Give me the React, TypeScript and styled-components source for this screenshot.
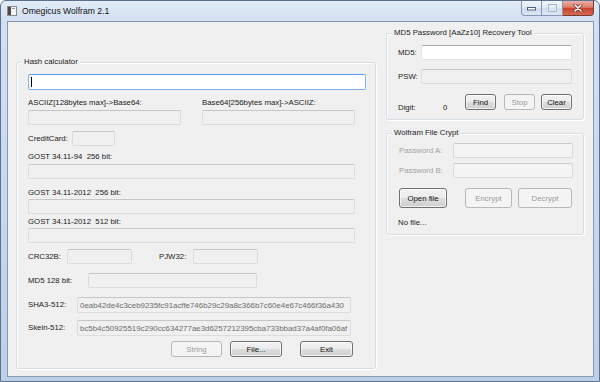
import React from 'react';
import styled, { createGlobalStyle } from 'styled-components';

const FONT = `'Liberation Sans', Tahoma, Arial, sans-serif`;

const GlobalStyle = createGlobalStyle`
  html, body {
    margin: 0;
    padding: 0;
    width: 600px;
    height: 382px;
    overflow: hidden;
    background: #ffffff;
  }
  body {
    font-family: ${FONT};
  }
`;

const Window = styled.div`
  box-sizing: border-box;
  width: 600px;
  height: 382px;
  display: flex;
  flex-direction: column;
  border: 1px solid #5d7190;
  border-radius: 6px 6px 0 0;
  background: linear-gradient(180deg, #e3ecf7 0%, #d2e0f1 18px, #c6d7ec 60%, #bcd0e8 100%);
`;

const TitleBar = styled.div`
  height: 20px;
  display: flex;
  align-items: center;
  padding-left: 6px;
`;

const Title = styled.span`
  margin-left: 5px;
  font-family: ${FONT};
  font-size: 8.6px;
  color: #111;
  line-height: 12px;
`;

const CaptionButtons = styled.div`
  margin-left: auto;
  margin-right: 5px;
  align-self: flex-start;
  display: flex;
  height: 15px;
`;

const CapBtn = styled.div<{ $w: number; $kind: 'min' | 'max' | 'close' }>`
  box-sizing: border-box;
  width: ${(p) => p.$w}px;
  height: 15px;
  display: flex;
  align-items: center;
  justify-content: center;
  border: 1px solid ${(p) => (p.$kind === 'close' ? '#7c3b31' : '#8497b5')};
  border-top: none;
  border-left: ${(p) => (p.$kind === 'min' ? '1px solid #8497b5' : 'none')};
  border-radius: ${(p) =>
    p.$kind === 'min' ? '0 0 0 4px' : p.$kind === 'close' ? '0 0 4px 0' : '0'};
  background: ${(p) =>
    p.$kind === 'close'
      ? 'linear-gradient(180deg, #eab0a5 0%, #de7e6c 45%, #c9432f 52%, #d66a52 100%)'
      : 'linear-gradient(180deg, #f1f5fb 0%, #e2eaf5 48%, #d0dded 52%, #dbe6f3 100%)'};
`;

const Client = styled.div`
  box-sizing: border-box;
  flex: 1;
  margin: 0 5px 4px 6px;
  background: #f0f0f0;
  border: 1px solid #8598b4;
  display: flex;
  align-items: flex-start;
  padding-left: 8px;
`;

const Column = styled.div`
  display: flex;
  flex-direction: column;
  margin-left: 10px;
`;

const Group = styled.div<{ $w: number; $h: number; $mt: number }>`
  box-sizing: border-box;
  width: ${(p) => p.$w}px;
  height: ${(p) => p.$h}px;
  margin-top: ${(p) => p.$mt}px;
  border: 1px solid #d5dfe5;
  border-radius: 3px;
  box-shadow: inset 1px 1px 0 #ffffff, 1px 1px 0 #ffffff;
  display: flex;
  flex-direction: column;
  align-items: flex-start;
  padding-left: 11px;
`;

const Caption = styled.span`
  margin: -6px 0 0 -6px;
  padding: 0 2px;
  background: #f0f0f0;
  font-family: ${FONT};
  font-size: 7.8px;
  line-height: 10px;
  color: #1a1a1a;
  white-space: nowrap;
`;

const Row = styled.div<{ $mt: number; $gap?: number; $top?: boolean }>`
  display: flex;
  align-items: ${(p) => (p.$top ? 'flex-start' : 'center')};
  gap: ${(p) => p.$gap || 0}px;
  margin-top: ${(p) => p.$mt}px;
`;

const Field = styled.div<{ $mt?: number }>`
  display: flex;
  flex-direction: column;
  margin-top: ${(p) => p.$mt || 0}px;
`;

const Label = styled.span<{ $w?: number; $ml?: number; $dim?: boolean; $low?: boolean }>`
  flex-shrink: 0;
  width: ${(p) => (p.$w ? `${p.$w}px` : 'auto')};
  margin-left: ${(p) => p.$ml || 0}px;
  font-family: ${FONT};
  font-size: 7.8px;
  line-height: 10px;
  color: ${(p) => (p.$dim ? '#a3a3a3' : '#1a1a1a')};
  white-space: nowrap;
  align-self: ${(p) => (p.$low ? 'flex-end' : 'auto')};
  margin-bottom: ${(p) => (p.$low ? -3 : 0)}px;
`;

type BoxKind = 'focus' | 'edit' | 'ro' | 'dis';

const BOX_BORDER: Record<BoxKind, string> = {
  focus: 'border: 1px solid #7eb4ea; border-top-color: #569de5;',
  edit: 'border: 1px solid #e2e3ea; border-top-color: #abadb3;',
  ro: 'border: 1px solid #dcdcdc; border-top-color: #c6c6c6;',
  dis: 'border: 1px solid #d9d9d9; border-top-color: #cbcbcb;',
};

const BOX_BG: Record<BoxKind, string> = {
  focus: '#ffffff',
  edit: '#ffffff',
  ro: '#f0f0f0',
  dis: '#f4f4f4',
};

const TextBox = styled.div<{ $w: number; $h: number; $kind: BoxKind; $mt?: number }>`
  box-sizing: border-box;
  flex-shrink: 0;
  width: ${(p) => p.$w}px;
  height: ${(p) => p.$h}px;
  margin-top: ${(p) => p.$mt || 0}px;
  ${(p) => BOX_BORDER[p.$kind]}
  background: ${(p) => BOX_BG[p.$kind]};
  border-radius: 2px;
  overflow: hidden;
  display: flex;
  align-items: center;
  padding-left: 2px;
`;

const Caret = styled.span`
  width: 1px;
  height: 10px;
  background: #000;
`;

const HashText = styled.span`
  font-family: ${FONT};
  font-size: 7.9px;
  color: #6b6b6b;
  white-space: nowrap;
`;

const Button = styled.div<{ $w: number; $h?: number; $ml?: number; $dis?: boolean }>`
  box-sizing: border-box;
  flex-shrink: 0;
  width: ${(p) => p.$w}px;
  height: ${(p) => p.$h || 16}px;
  margin-left: ${(p) => p.$ml || 0}px;
  display: flex;
  align-items: center;
  justify-content: center;
  border: 1px solid ${(p) => (p.$dis ? '#b5b9bc' : '#707070')};
  border-radius: 3px;
  background: ${(p) =>
    p.$dis
      ? '#f4f4f4'
      : 'linear-gradient(180deg, #f2f2f2 0%, #ebebeb 50%, #dddddd 51%, #cfcfcf 100%)'};
  box-shadow: ${(p) => (p.$dis ? 'none' : 'inset 0 0 0 1px rgba(255,255,255,0.7)')};
  font-family: ${FONT};
  font-size: 7.8px;
  color: ${(p) => (p.$dis ? '#9a9a9a' : '#111')};
`;

const AppIcon = () => (
  <svg width="10" height="10" viewBox="0 0 10 10">
    <rect x="0.5" y="0.5" width="9" height="9" fill="#f4f4f4" stroke="#8a8a8a" />
    <rect x="1" y="1" width="3" height="8" fill="#4a4a4a" />
    <rect x="5" y="2" width="3" height="1" fill="#9c9c9c" />
  </svg>
);

const MinGlyph = () => (
  <svg width="9" height="5" viewBox="0 0 9 5">
    <rect x="0.5" y="1.5" width="8" height="2.5" fill="#ffffff" stroke="#4d5f7a" strokeWidth="1" />
  </svg>
);

const MaxGlyph = () => (
  <svg width="9" height="8" viewBox="0 0 9 8">
    <rect x="0.5" y="0.5" width="8" height="7" fill="none" stroke="#a9b8cc" strokeWidth="1" />
    <rect x="2" y="2.5" width="5" height="3.5" fill="none" stroke="#e8eef6" strokeWidth="1" />
  </svg>
);

const CloseGlyph = () => (
  <svg width="10" height="8" viewBox="0 0 10 8">
    <path d="M2 1 L8 7 M8 1 L2 7" stroke="#6a2a22" strokeWidth="3" strokeLinecap="round" />
    <path d="M2 1 L8 7 M8 1 L2 7" stroke="#ffffff" strokeWidth="1.6" strokeLinecap="round" />
  </svg>
);

const SHA3 = '0eab42de4c3ceb9235fc91acffe746b29c29a8c366b7c60e4e67c466f36a430';
const SKEIN = 'bc5b4c50925519c290cc634277ae3d6257212395cba733bbad37a4af0fa06af';

export default function App() {
  return (
    <>
      <GlobalStyle />
      <Window>
        <TitleBar>
          <AppIcon />
          <Title>Omegicus Wolfram 2.1</Title>
          <CaptionButtons>
            <CapBtn $w={21} $kind="min">
              <MinGlyph />
            </CapBtn>
            <CapBtn $w={21} $kind="max">
              <MaxGlyph />
            </CapBtn>
            <CapBtn $w={31} $kind="close">
              <CloseGlyph />
            </CapBtn>
          </CaptionButtons>
        </TitleBar>

        <Client>
          <Group $w={360} $h={307} $mt={40}>
            <Caption>Hash calculator</Caption>
            <TextBox $kind="focus" $w={338} $h={16} $mt={7}>
              <Caret />
            </TextBox>

            <Row $mt={8} $gap={21} $top>
              <Field>
                <Label>ASCIIZ[128bytes max]-&gt;Base64:</Label>
                <TextBox $kind="ro" $w={153} $h={15} $mt={2} />
              </Field>
              <Field>
                <Label>Base64[256bytes max]-&gt;ASCIIZ:</Label>
                <TextBox $kind="ro" $w={153} $h={15} $mt={2} />
              </Field>
            </Row>

            <Row $mt={6}>
              <Label $w={44}>CreditCard:</Label>
              <TextBox $kind="ro" $w={43} $h={15} />
            </Row>

            <Field $mt={6}>
              <Label>GOST 34.11-94&nbsp; 256 bit:</Label>
              <TextBox $kind="ro" $w={327} $h={15} $mt={2} />
            </Field>
            <Field $mt={9}>
              <Label>GOST 34.11-2012&nbsp; 256 bit:</Label>
              <TextBox $kind="ro" $w={327} $h={15} $mt={1} />
            </Field>
            <Field $mt={3}>
              <Label>GOST 34.11-2012&nbsp; 512 bit:</Label>
              <TextBox $kind="ro" $w={327} $h={15} $mt={1} />
            </Field>

            <Row $mt={6}>
              <Label $w={39}>CRC32B:</Label>
              <TextBox $kind="ro" $w={65} $h={15} />
              <Label $w={34} $ml={27}>PJW32:</Label>
              <TextBox $kind="ro" $w={65} $h={15} />
            </Row>

            <Row $mt={9}>
              <Label $w={60}>MD5 128 bit:</Label>
              <TextBox $kind="ro" $w={169} $h={15} />
            </Row>

            <Row $mt={9}>
              <Label $w={49}>SHA3-512:</Label>
              <TextBox $kind="ro" $w={274} $h={16}>
                <HashText>{SHA3}</HashText>
              </TextBox>
            </Row>
            <Row $mt={7}>
              <Label $w={49}>Skein-512:</Label>
              <TextBox $kind="ro" $w={274} $h={16}>
                <HashText>{SKEIN}</HashText>
              </TextBox>
            </Row>

            <Row $mt={5}>
              <Button $w={51} $ml={143} $dis>
                String
              </Button>
              <Button $w={52} $ml={8}>
                File...
              </Button>
              <Button $w={53} $ml={18}>
                Exit
              </Button>
            </Row>
          </Group>

          <Column>
            <Group $w={198} $h={87} $mt={11}>
              <Caption>MD5 Password [AaZz10] Recovery Tool</Caption>
              <Row $mt={7}>
                <Label $w={23}>MD5:</Label>
                <TextBox $kind="edit" $w={151} $h={15} />
              </Row>
              <Row $mt={9}>
                <Label $w={23}>PSW:</Label>
                <TextBox $kind="ro" $w={151} $h={15} />
              </Row>
              <Row $mt={10}>
                <Label $w={45} $low>
                  Digit:
                </Label>
                <Label $w={22} $low>
                  0
                </Label>
                <Button $w={31}>Find</Button>
                <Button $w={31} $ml={8} $dis>
                  Stop
                </Button>
                <Button $w={31} $ml={6}>
                  Clear
                </Button>
              </Row>
            </Group>

            <Group $w={198} $h={102} $mt={13}>
              <Caption>Wolfram File Crypt</Caption>
              <Row $mt={5}>
                <Label $w={54} $ml={1} $dim>
                  Password A:
                </Label>
                <TextBox $kind="dis" $w={120} $h={15} />
              </Row>
              <Row $mt={5}>
                <Label $w={54} $ml={1} $dim>
                  Password B:
                </Label>
                <TextBox $kind="dis" $w={120} $h={15} />
              </Row>
              <Row $mt={10}>
                <Button $w={48} $h={20} $ml={1}>
                  Open file
                </Button>
                <Button $w={47} $h={20} $ml={18} $dis>
                  Encrypt
                </Button>
                <Button $w={54} $h={20} $ml={6} $dis>
                  Decrypt
                </Button>
              </Row>
              <Field $mt={10}>
                <Label>No file...</Label>
              </Field>
            </Group>
          </Column>
        </Client>
      </Window>
    </>
  );
}
